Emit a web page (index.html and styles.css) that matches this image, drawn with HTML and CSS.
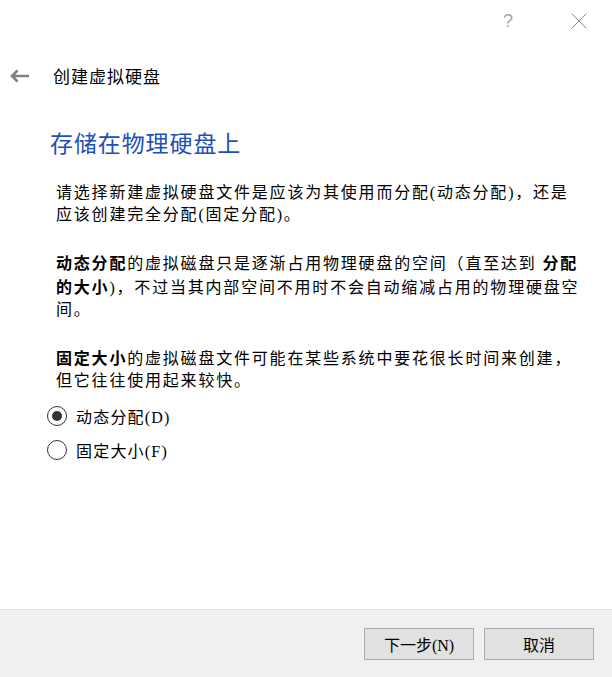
FILE: index.html
```html
<!DOCTYPE html>
<html lang="zh-CN">
<head>
  <meta charset="UTF-8">
  <meta name="viewport" content="width=device-width, initial-scale=1.0">
  <title>创建虚拟硬盘</title>
  <link rel="stylesheet" href="styles.css">
</head>
<body>
  <div class="titlebar">
    <span class="help">?</span>
    <svg class="close" width="16" height="16" viewBox="0 0 16 16">
      <path d="M0.5 0.5 L15.5 15.5 M15.5 0.5 L0.5 15.5" stroke="#8c8c8c" stroke-width="1" fill="none"/>
    </svg>
  </div>
  <header class="wizard-head">
    <svg class="back" width="20" height="14" viewBox="0 0 20 14">
      <path d="M3 7 H20 M8.5 1.5 L3 7 L8.5 12.5" stroke="#808080" stroke-width="2.6" fill="none"/>
    </svg>
    <span class="wizard-title">创建虚拟硬盘</span>
  </header>
  <main class="content">
    <h2 class="heading">存储在物理硬盘上</h2>
    <div class="text">
      <p>请选择新建虚拟硬盘文件是应该为其使用而分配(动态分配)，还是<br>应该创建完全分配(固定分配)。</p>
      <p><b>动态分配</b>的虚拟磁盘只是逐渐占用物理硬盘的空间（直至达到 <b>分配<br>的大小</b>)，不过当其内部空间不用时不会自动缩减占用的物理硬盘空<br>间。</p>
      <p><b>固定大小</b>的虚拟磁盘文件可能在某些系统中要花很长时间来创建，<br>但它往往使用起来较快。</p>
    </div>
    <div class="options">
      <label class="option"><input type="radio" name="alloc" checked><span>动态分配(D)</span></label>
      <label class="option"><input type="radio" name="alloc"><span>固定大小(F)</span></label>
    </div>
  </main>
  <footer class="footer">
    <button class="btn">下一步(N)</button>
    <button class="btn">取消</button>
  </footer>
</body>
</html>
```

FILE: styles.css
```css
html, body {
  height: 100%;
}
body {
  margin: 0;
  display: flex;
  flex-direction: column;
  background: #fff;
  color: #000;
  font-family: "Liberation Serif", "Noto Sans CJK SC", serif;
}
.titlebar {
  height: 42px;
  display: flex;
  align-items: center;
  justify-content: flex-end;
  padding-right: 25px;
  gap: 58px;
}
.help {
  font-family: "Liberation Sans", sans-serif;
  font-size: 18px;
  color: #a6a6a6;
}
.close {
  display: block;
}
.wizard-head {
  margin-top: 22px;
  height: 24px;
  display: flex;
  align-items: center;
  padding-left: 9px;
}
.back {
  display: block;
}
.wizard-title {
  margin-left: 24px;
  font-family: "Noto Sans CJK SC", sans-serif;
  font-size: 17px;
  letter-spacing: 1px;
  line-height: 24px;
}
.content {
  flex: 1;
  padding-left: 50px;
}
.heading {
  margin: 39px 0 0;
  font-family: "Noto Sans CJK SC", sans-serif;
  font-weight: normal;
  font-size: 23px;
  letter-spacing: 0.9px;
  line-height: 30px;
  color: #1d4fb8;
}
.text {
  padding-left: 6px;
  margin-top: 25px;
}
.text p {
  margin: 0 0 25px;
  font-size: 16px;
  letter-spacing: 1.8px;
  line-height: 22px;
  white-space: nowrap;
}
.text p b {
  font-family: "Noto Sans CJK SC", sans-serif;
  font-weight: bold;
}
.options {
  margin-top: -18px;
}
.option {
  display: flex;
  align-items: center;
  height: 34px;
  font-size: 16px;
  letter-spacing: 1.2px;
}
.option input {
  appearance: none;
  -webkit-appearance: none;
  margin: 0 9px 0 -3px;
  width: 20px;
  height: 20px;
  border: 1.5px solid #333;
  border-radius: 50%;
  display: grid;
  place-items: center;
}
.option input:checked::after {
  content: "";
  width: 10px;
  height: 10px;
  border-radius: 50%;
  background: #333;
}
.footer {
  height: 68px;
  box-sizing: border-box;
  border-top: 1px solid #dfdfdf;
  background: #f0f0f0;
  display: flex;
  justify-content: flex-end;
  align-items: flex-start;
  gap: 10px;
  padding: 18px 18px 0 0;
}
.btn {
  width: 110px;
  height: 32px;
  background: #e1e1e1;
  border: 1px solid #adadad;
  font-family: "Liberation Serif", "Noto Sans CJK SC", serif;
  font-size: 16px;
  color: #000;
  padding: 0;
}
```
